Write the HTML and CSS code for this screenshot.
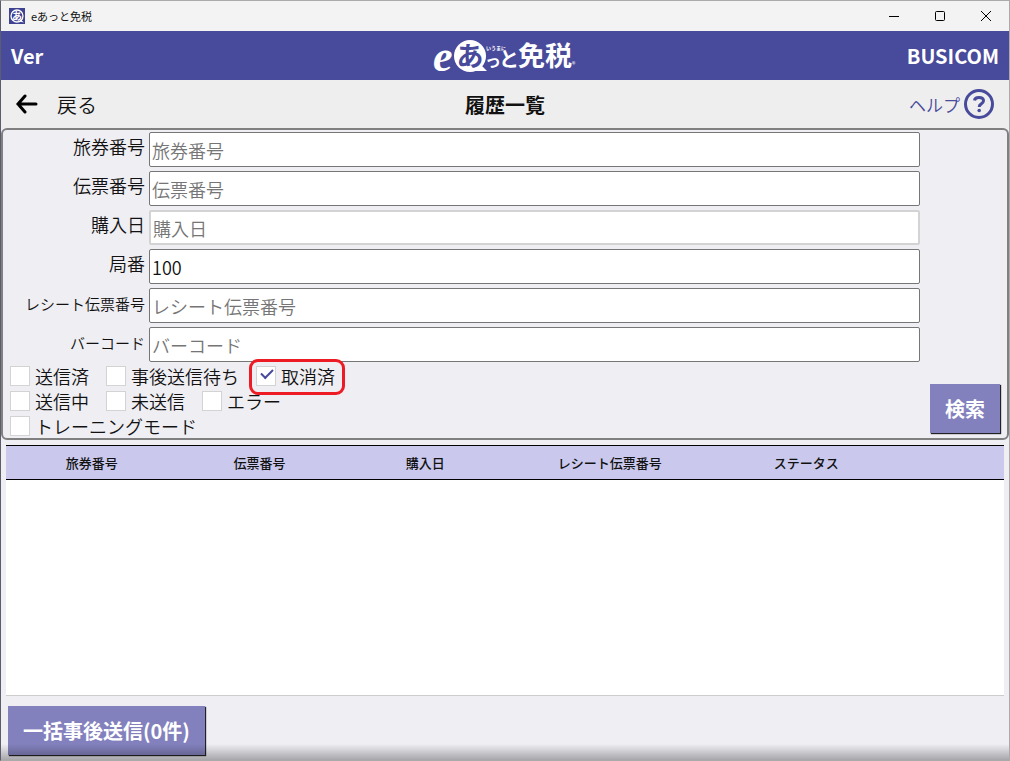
FILE: index.html
```html
<!DOCTYPE html>
<html lang="ja">
<head>
<meta charset="UTF-8">
<title>eあっと免税</title>
<link rel="stylesheet" href="styles.css">
</head>

<body>

<div class="window">

  <div class="titlebar">
    <svg class="appIcon" width="16" height="16" viewBox="0 0 16 16">
      <rect width="16" height="16" fill="#3f4191"/>
      <circle cx="8" cy="8" r="6" fill="#3f4191" stroke="#fff" stroke-width="1.3"/>
      <path d="M12 12l3 2.5-5-1z" fill="#fff"/>
      <text x="8" y="12" font-size="10" font-weight="700" text-anchor="middle" fill="#fff">あ</text>
    </svg>
    <span class="appName">eあっと免税</span>
    <div class="winButtons">
      <button type="button" aria-label="最小化"><svg width="12" height="12" viewBox="0 0 12 12"><path d="M1 6.5h10"/></svg></button>
      <button type="button" aria-label="最大化"><svg width="12" height="12" viewBox="0 0 12 12"><rect x="1.5" y="1.5" width="9" height="9" rx="1"/></svg></button>
      <button type="button" aria-label="閉じる"><svg width="12" height="12" viewBox="0 0 12 12"><path d="M1 1l10 10M11 1L1 11"/></svg></button>
    </div>
  </div>

  <header class="header">
    <span class="ver">Ver</span>
    <svg class="logo" width="146" height="49" viewBox="0 0 146 49" role="img" aria-label="eあっと免税">
      <text class="logoE" x="1" y="40">e</text>
      <circle cx="38" cy="25" r="16" fill="#fff"/>
      <path d="M48 33l7 7-16 0z" fill="#fff"/>
      <text class="logoA" x="38" y="35" text-anchor="middle">あ</text>
      <text class="logoRuby" x="54" y="19">いうまに</text>
      <text class="logoSmallTsu" x="53" y="36">っ</text>
      <text class="logoKana" x="67" y="36">と</text>
      <text class="logoKanji" x="86" y="35">免税</text>
      <text class="logoReg" x="140" y="36">®</text>
    </svg>
    <span class="company">BUSICOM</span>
  </header>

  <nav class="subbar">
    <a class="back" href="#">
      <svg width="22" height="20" viewBox="0 0 22 20"><path d="M9 2L2 10l7 8M2 10h18"/></svg>
      <span>戻る</span>
    </a>
    <h1>履歴一覧</h1>
    <a class="help" href="#">
      <span>ヘルプ</span>
      <svg width="30" height="30" viewBox="0 0 30 30">
        <circle cx="15" cy="15" r="13.500"/>
        <path class="mark" d="M10.500 11.500Q10.800 8.500 15 8.500Q19.500 8.500 19.500 11.800Q19.500 13.700 17 15.100Q15.200 16.200 15.200 18"/>
        <circle class="dot" cx="15.200" cy="21.500" r="1.800"/>
      </svg>
    </a>
  </nav>

  <form class="search">
    <div class="fields">
      <label for="passport">旅券番号</label>
      <input id="passport" type="text" placeholder="旅券番号">
      <label for="slip">伝票番号</label>
      <input id="slip" type="text" placeholder="伝票番号">
      <label for="date">購入日</label>
      <input id="date" class="dateInput" type="text" placeholder="購入日">
      <label for="station">局番</label>
      <input id="station" type="text" value="100">
      <label for="receipt" class="small">レシート伝票番号</label>
      <input id="receipt" type="text" placeholder="レシート伝票番号">
      <label for="barcode" class="small">バーコード</label>
      <input id="barcode" type="text" placeholder="バーコード">
    </div>

    <div class="filters">
      <div class="checks">
        <div class="checkRow">
          <label><input type="checkbox">送信済</label>
          <label><input type="checkbox">事後送信待ち</label>
          <label class="marked"><input type="checkbox" checked>取消済</label>
        </div>
        <div class="checkRow">
          <label><input type="checkbox">送信中</label>
          <label><input type="checkbox">未送信</label>
          <label><input type="checkbox">エラー</label>
        </div>
        <div class="checkRow">
          <label><input type="checkbox">トレーニングモード</label>
        </div>
      </div>
      <button type="button" class="btn">検索</button>
    </div>
  </form>

  <div class="results">
    <table>
      <colgroup>
        <col class="colPassport"><col class="colSlip"><col class="colDate"><col class="colReceipt"><col class="colStatus"><col>
      </colgroup>
      <thead>
        <tr>
          <th>旅券番号</th>
          <th>伝票番号</th>
          <th>購入日</th>
          <th>レシート伝票番号</th>
          <th>ステータス</th>
          <th></th>
        </tr>
      </thead>
    </table>
  </div>

  <footer class="footer">
    <button type="button" class="btn">一括事後送信(0件)</button>
  </footer>

</div>

</body>
</html>
```
FILE: styles.css
```css
*{
  box-sizing:border-box;
}

body{
  margin:0;
  font-family:"Noto Sans CJK JP", sans-serif;
  color:#111;
}

button, input{
  font-family:inherit;
}

a{
  color:inherit;
  text-decoration:none;
}

.window{
  min-height:100vh;
  display:flex;
  flex-direction:column;
  background:#efeef3;
  border:1px solid #aaa;
  border-left-color:#5b5d6e;
}

/* title bar */
.titlebar{
  display:flex;
  align-items:center;
  height:30px;
  padding-left:8px;
  background:#f3f3f3;
}

.appName{
  margin-left:6px;
  font-size:11px;
}

.winButtons{
  display:flex;
  margin-left:auto;
}

.winButtons button{
  display:flex;
  align-items:center;
  justify-content:center;
  width:46px;
  height:30px;
  padding:0;
  border:none;
  background:none;
}

.winButtons svg{
  fill:none;
  stroke:#000;
}

/* header */
.header{
  display:grid;
  grid-template-columns:1fr auto 1fr;
  align-items:center;
  height:49px;
  padding:0 10px;
  background:#484a9b;
  color:#fff;
  font-size:20px;
  font-weight:700;
}

.company{
  text-align:right;
}

.logo{
  fill:#fff;
}

.logoE{
  font:italic 700 44px "Liberation Serif", serif;
}

.logoA{
  font-size:27px;
  font-weight:700;
  fill:#484a9b;
}

.logoRuby{
  font-size:5px;
}

.logoSmallTsu{
  font-size:16px;
}

.logoKana{
  font-size:20px;
  font-weight:700;
}

.logoKanji{
  font-size:27px;
  font-weight:700;
}

.logoReg{
  font-size:7px;
  font-weight:400;
}

/* back, page title, help */
.subbar{
  display:grid;
  grid-template-columns:1fr auto 1fr;
  align-items:center;
  height:48px;
  padding:0 15px;
  background:#eee;
}

.subbar h1{
  margin:0;
  font-size:20px;
  font-weight:700;
}

.back{
  display:flex;
  align-items:center;
  gap:19px;
  font-size:20px;
  font-weight:350;
}

.back svg{
  fill:none;
  stroke:#000;
  stroke-width:3;
  stroke-linecap:round;
}

.help{
  display:flex;
  align-items:center;
  justify-content:flex-end;
  gap:4px;
  color:#484a9b;
  font-size:17px;
  font-weight:350;
}

.help svg{
  fill:none;
  stroke:#484a9b;
  stroke-width:3;
}

.help .dot{
  fill:#484a9b;
  stroke:none;
}

/* search form */
.search{
  padding:2px 7px 2px 6px;
  border:2px solid #808080;
  border-radius:6px;
  font-size:18px;
  font-weight:350;
}

.fields{
  display:grid;
  grid-template-columns:136px 1fr;
  gap:4px;
  padding-right:80px;
}

.fields label{
  line-height:28px;
  text-align:right;
}

.fields label.small{
  font-size:15px;
  line-height:32px;
}

.fields input{
  width:100%;
  height:35px;
  padding:0 2px;
  border:1px solid #767676;
  border-radius:2px;
  background:#fff;
  color:#111;
  font-size:18px;
  font-weight:350;
}

.fields input::placeholder{
  color:#757575;
}

.fields .dateInput{
  border:2px solid #d3d3d3;
}

.filters{
  display:flex;
  align-items:flex-end;
  justify-content:space-between;
}

.filters .btn{
  margin-bottom:3px;
}

.checks{
  display:flex;
  flex-direction:column;
  gap:5px;
  padding:4px 0 0 1px;
}

.checkRow{
  display:flex;
  gap:17px;
}

.checkRow label{
  position:relative;
  display:flex;
  align-items:center;
  gap:5px;
  height:20px;
}

.checkRow input{
  appearance:none;
  position:relative;
  width:20px;
  height:20px;
  margin:0;
  border:1px solid #d3d3d3;
  background:#fff;
}

.checkRow input:checked::after{
  content:"";
  position:absolute;
  left:4px;
  top:2px;
  width:10px;
  height:5px;
  border-left:2px solid #484a9b;
  border-bottom:2px solid #484a9b;
  transform:rotate(-45deg);
}

.marked::after{
  content:"";
  position:absolute;
  inset:-7px -10px -9px -7px;
  border:3px solid #ed1c24;
  border-radius:9px;
}

.btn{
  height:49px;
  padding:0 15px;
  border:none;
  background:#8381bd;
  box-shadow:1px 1px 1px #222;
  color:#fff;
  font-size:20px;
  font-weight:700;
}

/* results */
.results{
  flex:1;
  margin:5px 5px 0;
  background:#fff;
  border-bottom:1px solid #ccc;
}

.results table{
  width:100%;
  table-layout:fixed;
  border-collapse:collapse;
}

.results th{
  height:34px;
  padding:0;
  background:#cac9ed;
  border-top:1px solid #000;
  border-bottom:1px solid #000;
  font-size:13px;
  font-weight:500;
}

.colPassport{ width:17.2%; }
.colSlip{ width:16.4%; }
.colDate{ width:16.8%; }
.colReceipt{ width:20.2%; }
.colStatus{ width:19.2%; }

.footer{
  position:relative;
  padding:10px 7px 5px;
}

/* shade along the bottom edge */
.footer::after{
  content:"";
  position:absolute;
  left:0;
  right:0;
  bottom:0;
  height:16px;
  background:linear-gradient(rgba(0,0,0,0), rgba(0,0,0,.3));
  pointer-events:none;
}
```
